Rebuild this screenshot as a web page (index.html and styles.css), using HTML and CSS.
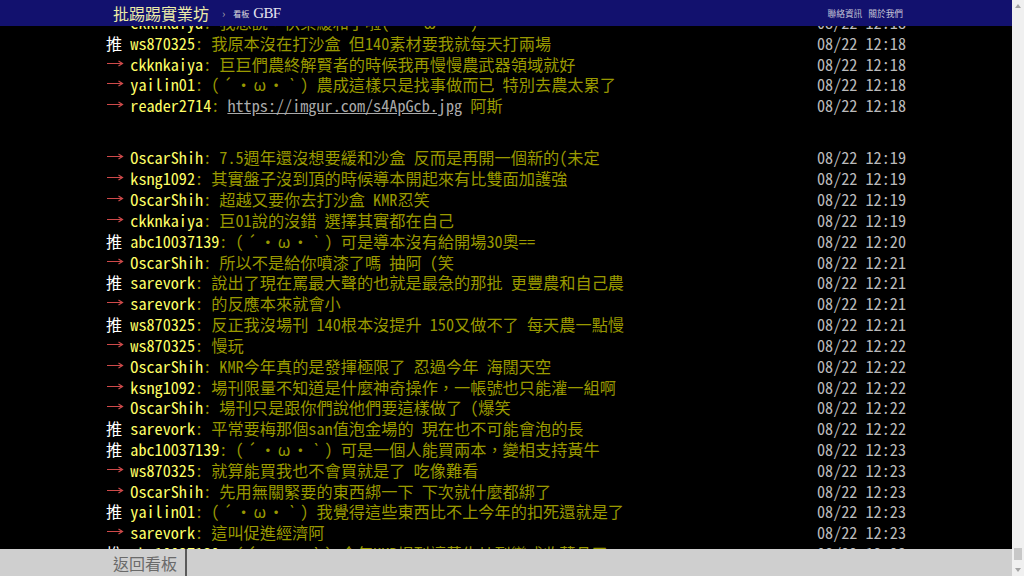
FILE: index.html
```html
<!DOCTYPE html>
<html lang="zh-Hant">
<head>
<meta charset="utf-8">
<title>批踢踢實業坊 › 看板 GBF</title>
<link rel="stylesheet" href="styles.css">
</head>
<body>
<div class="page">
  <header class="topbar">
    <div class="bar-inner">
      <span class="logo">批踢踢實業坊</span>
      <span class="crumb-sep">›</span>
      <span class="board-label">看板</span>
      <span class="board-name">GBF</span>
      <nav class="links"><span>聯絡資訊</span><span>關於我們</span></nav>
    </div>
  </header>

  <main class="main">
    <div class="screen">
      <div class="push"><span class="tag arrow"><svg class="arr" width="17" height="7" viewBox="0 0 17 7"><path d="M0 3.5H15.5M11.5 1L15.5 3.5L11.5 6" fill="none" stroke="currentColor" stroke-width="1.2"/></svg></span><span class="uid">ckknkaiya</span><span class="txt">: 我想說，快樂緩和了啦(<span class="kao"><span>´</span><span>・</span><span>ω</span><span>・</span><span>`</span></span>)</span><span class="time">08/22 12:18</span></div>
      <div class="push"><span class="tag up">推</span><span class="uid">ws870325</span><span class="txt">: 我原本沒在打沙盒 但140素材要我就每天打兩場</span><span class="time">08/22 12:18</span></div>
      <div class="push"><span class="tag arrow"><svg class="arr" width="17" height="7" viewBox="0 0 17 7"><path d="M0 3.5H15.5M11.5 1L15.5 3.5L11.5 6" fill="none" stroke="currentColor" stroke-width="1.2"/></svg></span><span class="uid">ckknkaiya</span><span class="txt">: 巨巨們農終解賢者的時候我再慢慢農武器領域就好</span><span class="time">08/22 12:18</span></div>
      <div class="push"><span class="tag arrow"><svg class="arr" width="17" height="7" viewBox="0 0 17 7"><path d="M0 3.5H15.5M11.5 1L15.5 3.5L11.5 6" fill="none" stroke="currentColor" stroke-width="1.2"/></svg></span><span class="uid">yailin01</span><span class="txt">: (<span class="kao"><span>´</span><span>・</span><span>ω</span><span>・</span><span>`</span></span>) 農成這樣只是找事做而已 特別去農太累了</span><span class="time">08/22 12:18</span></div>
      <div class="push"><span class="tag arrow"><svg class="arr" width="17" height="7" viewBox="0 0 17 7"><path d="M0 3.5H15.5M11.5 1L15.5 3.5L11.5 6" fill="none" stroke="currentColor" stroke-width="1.2"/></svg></span><span class="uid">reader2714</span><span class="txt">: <span class="link">https://imgur.com/s4ApGcb.jpg</span> 阿斯</span><span class="time">08/22 12:18</span></div>
      <div class="blank"></div>
      <div class="push"><span class="tag arrow"><svg class="arr" width="17" height="7" viewBox="0 0 17 7"><path d="M0 3.5H15.5M11.5 1L15.5 3.5L11.5 6" fill="none" stroke="currentColor" stroke-width="1.2"/></svg></span><span class="uid">OscarShih</span><span class="txt">: 7.5週年還沒想要緩和沙盒 反而是再開一個新的(未定</span><span class="time">08/22 12:19</span></div>
      <div class="push"><span class="tag arrow"><svg class="arr" width="17" height="7" viewBox="0 0 17 7"><path d="M0 3.5H15.5M11.5 1L15.5 3.5L11.5 6" fill="none" stroke="currentColor" stroke-width="1.2"/></svg></span><span class="uid">ksng1092</span><span class="txt">: 其實盤子沒到頂的時候導本開起來有比雙面加護強</span><span class="time">08/22 12:19</span></div>
      <div class="push"><span class="tag arrow"><svg class="arr" width="17" height="7" viewBox="0 0 17 7"><path d="M0 3.5H15.5M11.5 1L15.5 3.5L11.5 6" fill="none" stroke="currentColor" stroke-width="1.2"/></svg></span><span class="uid">OscarShih</span><span class="txt">: 超越又要你去打沙盒 KMR忍笑</span><span class="time">08/22 12:19</span></div>
      <div class="push"><span class="tag arrow"><svg class="arr" width="17" height="7" viewBox="0 0 17 7"><path d="M0 3.5H15.5M11.5 1L15.5 3.5L11.5 6" fill="none" stroke="currentColor" stroke-width="1.2"/></svg></span><span class="uid">ckknkaiya</span><span class="txt">: 巨01說的沒錯 選擇其實都在自己</span><span class="time">08/22 12:19</span></div>
      <div class="push"><span class="tag up">推</span><span class="uid">abc10037139</span><span class="txt">: (<span class="kao"><span>´</span><span>・</span><span>ω</span><span>・</span><span>`</span></span>) 可是導本沒有給開場30奧==</span><span class="time">08/22 12:20</span></div>
      <div class="push"><span class="tag arrow"><svg class="arr" width="17" height="7" viewBox="0 0 17 7"><path d="M0 3.5H15.5M11.5 1L15.5 3.5L11.5 6" fill="none" stroke="currentColor" stroke-width="1.2"/></svg></span><span class="uid">OscarShih</span><span class="txt">: 所以不是給你噴漆了嗎 抽阿 (笑</span><span class="time">08/22 12:21</span></div>
      <div class="push"><span class="tag up">推</span><span class="uid">sarevork</span><span class="txt">: 說出了現在罵最大聲的也就是最急的那批 更豐農和自己農</span><span class="time">08/22 12:21</span></div>
      <div class="push"><span class="tag arrow"><svg class="arr" width="17" height="7" viewBox="0 0 17 7"><path d="M0 3.5H15.5M11.5 1L15.5 3.5L11.5 6" fill="none" stroke="currentColor" stroke-width="1.2"/></svg></span><span class="uid">sarevork</span><span class="txt">: 的反應本來就會小</span><span class="time">08/22 12:21</span></div>
      <div class="push"><span class="tag up">推</span><span class="uid">ws870325</span><span class="txt">: 反正我沒場刊 140根本沒提升 150又做不了 每天農一點慢</span><span class="time">08/22 12:21</span></div>
      <div class="push"><span class="tag arrow"><svg class="arr" width="17" height="7" viewBox="0 0 17 7"><path d="M0 3.5H15.5M11.5 1L15.5 3.5L11.5 6" fill="none" stroke="currentColor" stroke-width="1.2"/></svg></span><span class="uid">ws870325</span><span class="txt">: 慢玩</span><span class="time">08/22 12:22</span></div>
      <div class="push"><span class="tag arrow"><svg class="arr" width="17" height="7" viewBox="0 0 17 7"><path d="M0 3.5H15.5M11.5 1L15.5 3.5L11.5 6" fill="none" stroke="currentColor" stroke-width="1.2"/></svg></span><span class="uid">OscarShih</span><span class="txt">: KMR今年真的是發揮極限了 忍過今年 海闊天空</span><span class="time">08/22 12:22</span></div>
      <div class="push"><span class="tag arrow"><svg class="arr" width="17" height="7" viewBox="0 0 17 7"><path d="M0 3.5H15.5M11.5 1L15.5 3.5L11.5 6" fill="none" stroke="currentColor" stroke-width="1.2"/></svg></span><span class="uid">ksng1092</span><span class="txt">: 場刊限量不知道是什麼神奇操作，一帳號也只能灌一組啊</span><span class="time">08/22 12:22</span></div>
      <div class="push"><span class="tag arrow"><svg class="arr" width="17" height="7" viewBox="0 0 17 7"><path d="M0 3.5H15.5M11.5 1L15.5 3.5L11.5 6" fill="none" stroke="currentColor" stroke-width="1.2"/></svg></span><span class="uid">OscarShih</span><span class="txt">: 場刊只是跟你們說他們要這樣做了 (爆笑</span><span class="time">08/22 12:22</span></div>
      <div class="push"><span class="tag up">推</span><span class="uid">sarevork</span><span class="txt">: 平常要梅那個san值泡金場的 現在也不可能會泡的長</span><span class="time">08/22 12:22</span></div>
      <div class="push"><span class="tag up">推</span><span class="uid">abc10037139</span><span class="txt">: (<span class="kao"><span>´</span><span>・</span><span>ω</span><span>・</span><span>`</span></span>) 可是一個人能買兩本，變相支持黃牛</span><span class="time">08/22 12:23</span></div>
      <div class="push"><span class="tag arrow"><svg class="arr" width="17" height="7" viewBox="0 0 17 7"><path d="M0 3.5H15.5M11.5 1L15.5 3.5L11.5 6" fill="none" stroke="currentColor" stroke-width="1.2"/></svg></span><span class="uid">ws870325</span><span class="txt">: 就算能買我也不會買就是了 吃像難看</span><span class="time">08/22 12:23</span></div>
      <div class="push"><span class="tag arrow"><svg class="arr" width="17" height="7" viewBox="0 0 17 7"><path d="M0 3.5H15.5M11.5 1L15.5 3.5L11.5 6" fill="none" stroke="currentColor" stroke-width="1.2"/></svg></span><span class="uid">OscarShih</span><span class="txt">: 先用無關緊要的東西綁一下 下次就什麼都綁了</span><span class="time">08/22 12:23</span></div>
      <div class="push"><span class="tag up">推</span><span class="uid">yailin01</span><span class="txt">: (<span class="kao"><span>´</span><span>・</span><span>ω</span><span>・</span><span>`</span></span>) 我覺得這些東西比不上今年的扣死還就是了</span><span class="time">08/22 12:23</span></div>
      <div class="push"><span class="tag arrow"><svg class="arr" width="17" height="7" viewBox="0 0 17 7"><path d="M0 3.5H15.5M11.5 1L15.5 3.5L11.5 6" fill="none" stroke="currentColor" stroke-width="1.2"/></svg></span><span class="uid">sarevork</span><span class="txt">: 這叫促進經濟阿</span><span class="time">08/22 12:23</span></div>
      <div class="push"><span class="tag up">推</span><span class="uid">abc10037139</span><span class="txt">: (<span class="kao"><span>´</span><span>・</span><span>ω</span><span>・</span><span>`</span></span>) 今年KMR場刊讓黃牛炒到變成收藏品了</span><span class="time">08/22 12:23</span></div>
    </div>
  </main>

  <footer class="footbar">
    <div class="bar-inner">
      <span class="back-btn">返回看板</span>
    </div>
  </footer>
</div>

<div class="scrollbar">
  <div class="sb-btn"><svg width="6" height="4" viewBox="0 0 6 4"><polygon points="0,4 6,4 3,0" fill="#a3a3a3"/></svg></div>
  <div class="sb-track"><div class="sb-thumb"></div></div>
  <div class="sb-btn"><svg width="6" height="4" viewBox="0 0 6 4"><polygon points="0,0 6,0 3,4" fill="#a3a3a3"/></svg></div>
</div>
</body>
</html>
```

FILE: styles.css
```css
html, body {
  margin: 0;
  height: 100%;
  overflow: hidden;
  background: #000;
}

body {
  display: flex;
  font-family: "Noto Sans CJK TC", sans-serif;
}

.page {
  width: 1012px;
  height: 576px;
  display: flex;
  flex-direction: column;
  flex: none;
}

.bar-inner {
  width: 800px;
  height: 100%;
  margin: 0 auto;
  display: flex;
  align-items: center;
}

/* top bar */
.topbar {
  height: 26px;
  flex: none;
  background: #12116e;
  position: relative;
  z-index: 1;
}

.logo {
  margin-left: 7px;
  font-size: 16px;
  color: #ececa8;
  line-height: 1;
}

.crumb-sep {
  margin-left: 13px;
  font-size: 11px;
  color: #aaa;
}

.board-label {
  margin-left: 8px;
  font-size: 8px;
  color: #ddd;
}

.board-name {
  margin-left: 4px;
  font-family: "Liberation Serif", serif;
  font-size: 15px;
  letter-spacing: -0.7px;
  color: #e6e6f0;
}

.links {
  margin-left: auto;
  margin-right: 3px;
  display: flex;
  gap: 6px;
  font-size: 8.7px;
  color: #c4c4d8;
}

/* main screen */
.main {
  flex: 1;
  overflow: hidden;
  background: #000;
}

.screen {
  width: 800px;
  margin: -14px auto 0;
  font-size: 16.2px;
  line-height: 20.833px;
  font-feature-settings: "hwid";
  color: #bbb;
}

.push {
  height: 20.833px;
  display: flex;
  white-space: pre;
}

.blank {
  height: 31.25px;
}

.tag {
  flex: none;
  width: 24.3px;
}

.tag.up {
  color: #fff;
}

.tag.arrow {
  color: #cf4a4a;
}

.arr {
  vertical-align: 4px;
  margin-left: 1px;
}

.uid {
  color: #ff6;
}

.txt {
  flex: 1;
  color: #990;
}

.link {
  color: #aaa;
  text-decoration: underline;
}

.kao span {
  display: inline-block;
  width: 1em;
  text-align: center;
}

.time {
  flex: none;
  color: #bbb;
}

/* footer bar */
.footbar {
  height: 27px;
  flex: none;
  background: #cfcfcf;
  position: relative;
  z-index: 1;
}

.back-btn {
  height: 100%;
  display: flex;
  align-items: center;
  padding: 0 8px 0 7px;
  border-right: 2px solid #5a5a5a;
  font-size: 16px;
  color: #6a6a6a;
}

/* fake scrollbar */
.scrollbar {
  width: 12px;
  flex: none;
  height: 576px;
  background: #f0f0f0;
  display: flex;
  flex-direction: column;
}

.sb-btn {
  height: 12px;
  display: flex;
  align-items: center;
  justify-content: center;
}

.sb-track {
  flex: 1;
  display: flex;
  flex-direction: column;
  justify-content: flex-end;
  align-items: center;
}

.sb-thumb {
  width: 8px;
  height: 12px;
  margin-bottom: 4px;
  background: #c8c8c8;
}
```
